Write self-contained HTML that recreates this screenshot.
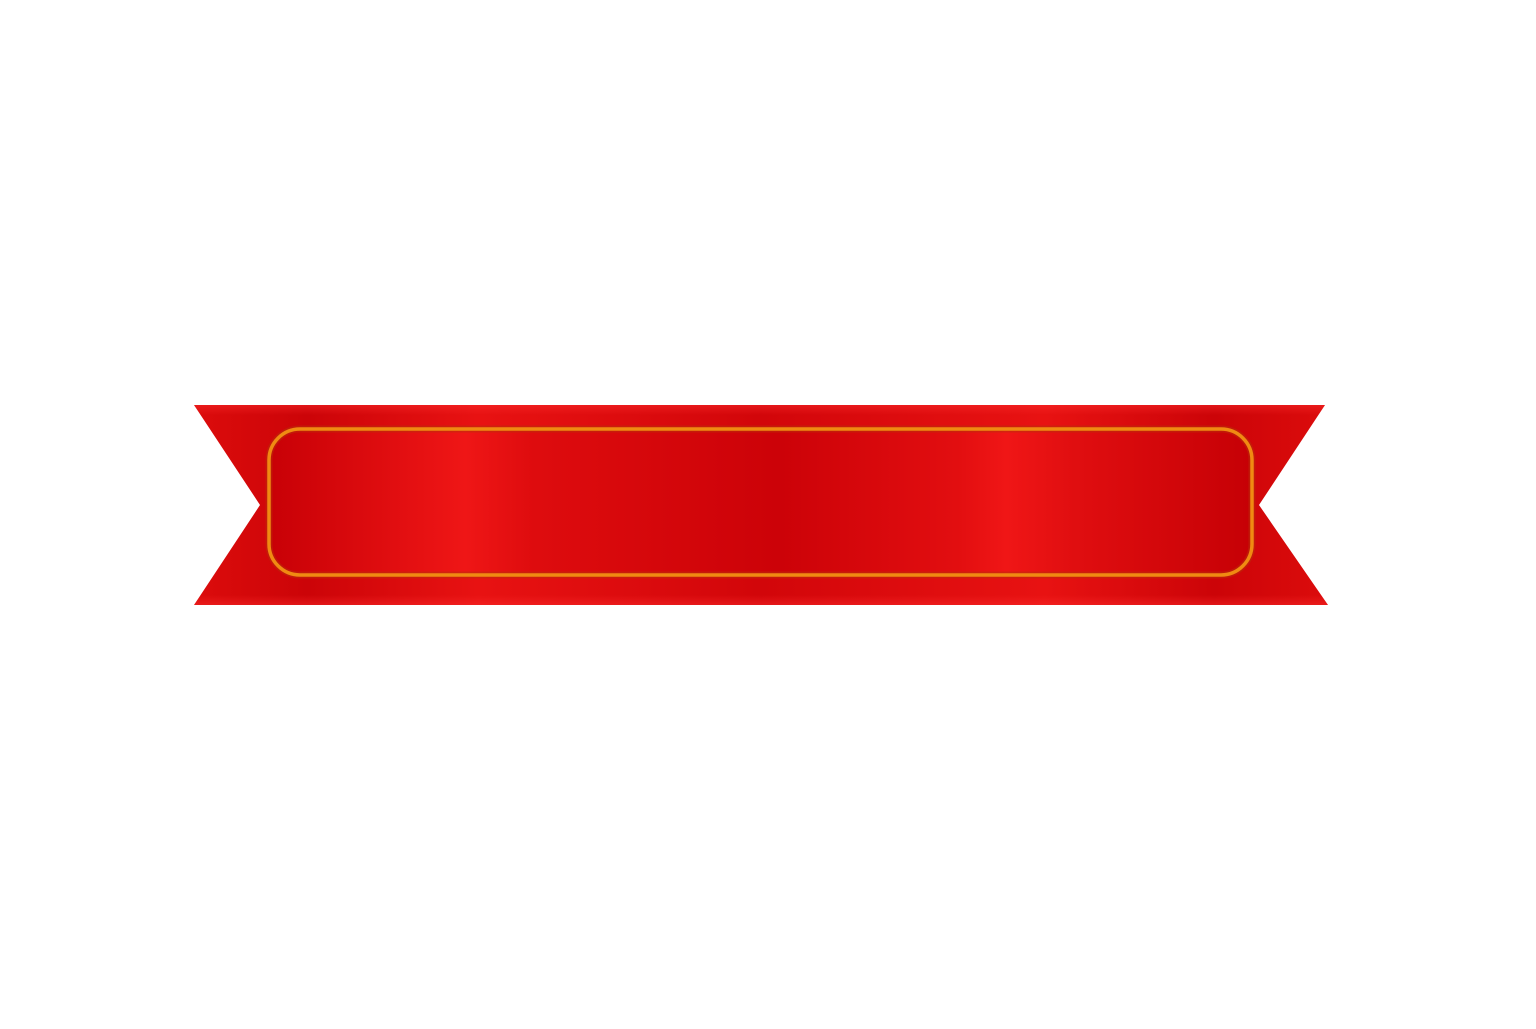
<!DOCTYPE html>
<html><head><style>html,body{margin:0;background:#fff;}</style></head><body>
<svg width="1536" height="1024" viewBox="0 0 1536 1024" xmlns="http://www.w3.org/2000/svg">
<defs>
<linearGradient id="o" x1="194" x2="1328" y1="0" y2="0" gradientUnits="userSpaceOnUse">
<stop offset="0" stop-color="#dc0c0c"/>
<stop offset="0.1" stop-color="#cc0408"/>
<stop offset="0.25" stop-color="#e81212"/>
<stop offset="0.5" stop-color="#d2060a"/>
<stop offset="0.75" stop-color="#e81212"/>
<stop offset="0.9" stop-color="#cc0408"/>
<stop offset="1" stop-color="#dc0c0c"/>
</linearGradient>
<linearGradient id="g" x1="269" x2="1252" y1="0" y2="0" gradientUnits="userSpaceOnUse">
<stop offset="0" stop-color="#c80006"/>
<stop offset="0.2" stop-color="#ef1616"/>
<stop offset="0.27" stop-color="#de0c0e"/>
<stop offset="0.52" stop-color="#cc0208"/>
<stop offset="0.7" stop-color="#e20e10"/>
<stop offset="0.75" stop-color="#f01616"/>
<stop offset="0.82" stop-color="#e00e10"/>
<stop offset="1" stop-color="#c60005"/>
</linearGradient>
<linearGradient id="v" x1="0" x2="0" y1="405" y2="605" gradientUnits="userSpaceOnUse">
<stop offset="0" stop-color="#ff3030" stop-opacity="0.4"/>
<stop offset="0.05" stop-color="#ff3030" stop-opacity="0.0"/>
<stop offset="0.95" stop-color="#ff3030" stop-opacity="0.0"/>
<stop offset="1" stop-color="#ff3030" stop-opacity="0.4"/>
</linearGradient>
</defs>
<polygon points="194,405 1325,405 1259,505 1328,605 194,605 260,505" fill="url(#o)"/>
<polygon points="194,405 1325,405 1259,505 1328,605 194,605 260,505" fill="url(#v)"/>
<rect x="269" y="429" width="983" height="146" rx="31" fill="url(#g)" stroke="#b8300a" stroke-opacity="0.5" stroke-width="7"/>
<rect x="269" y="429" width="983" height="146" rx="31" fill="none" stroke="#f08a12" stroke-width="3.5"/>
</svg>
</body></html>
